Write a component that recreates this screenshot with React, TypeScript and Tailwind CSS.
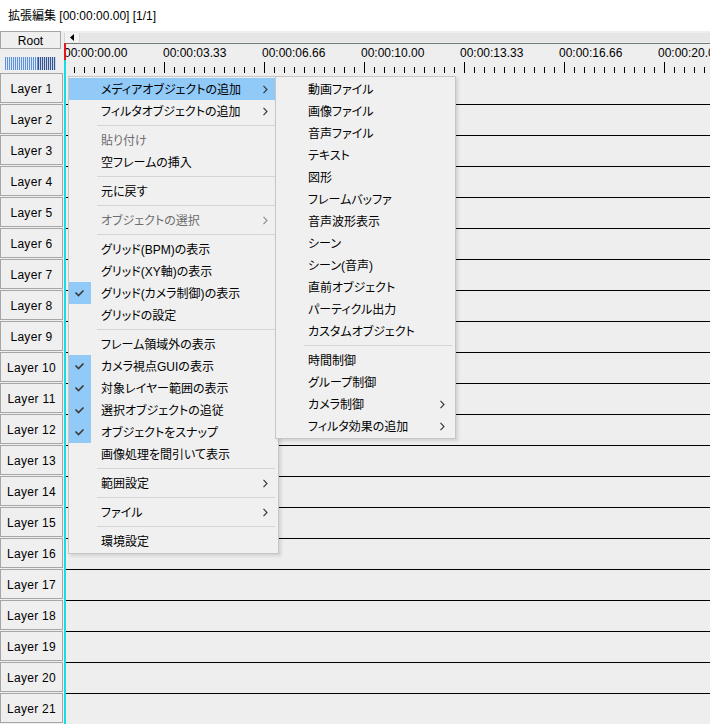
import React from 'react';

type Entry = {
  label?: string;
  sep?: boolean;
  checked?: boolean;
  disabled?: boolean;
  arrow?: boolean;
  active?: boolean;
};

const mainMenu: Entry[] = [
  { label: 'メディアオブジェクトの追加', arrow: true, active: true },
  { label: 'フィルタオブジェクトの追加', arrow: true },
  { sep: true },
  { label: '貼り付け', disabled: true },
  { label: '空フレームの挿入' },
  { sep: true },
  { label: '元に戻す' },
  { sep: true },
  { label: 'オブジェクトの選択', disabled: true, arrow: true },
  { sep: true },
  { label: 'グリッド(BPM)の表示' },
  { label: 'グリッド(XY軸)の表示' },
  { label: 'グリッド(カメラ制御)の表示', checked: true },
  { label: 'グリッドの設定' },
  { sep: true },
  { label: 'フレーム領域外の表示' },
  { label: 'カメラ視点GUIの表示', checked: true },
  { label: '対象レイヤー範囲の表示', checked: true },
  { label: '選択オブジェクトの追従', checked: true },
  { label: 'オブジェクトをスナップ', checked: true },
  { label: '画像処理を間引いて表示' },
  { sep: true },
  { label: '範囲設定', arrow: true },
  { sep: true },
  { label: 'ファイル', arrow: true },
  { sep: true },
  { label: '環境設定' },
];

const mediaMenu: Entry[] = [
  { label: '動画ファイル' },
  { label: '画像ファイル' },
  { label: '音声ファイル' },
  { label: 'テキスト' },
  { label: '図形' },
  { label: 'フレームバッファ' },
  { label: '音声波形表示' },
  { label: 'シーン' },
  { label: 'シーン(音声)' },
  { label: '直前オブジェクト' },
  { label: 'パーティクル出力' },
  { label: 'カスタムオブジェクト' },
  { sep: true },
  { label: '時間制御' },
  { label: 'グループ制御' },
  { label: 'カメラ制御', arrow: true },
  { label: 'フィルタ効果の追加', arrow: true },
];

const times = ['00:00:00.00', '00:00:03.33', '00:00:06.66', '00:00:10.00', '00:00:13.33', '00:00:16.66', '00:00:20.00'];
const layers = Array.from({ length: 21 }, (_, i) => i + 1);

function MenuItem({ e }: { e: Entry }) {
  if (e.sep) {
    return (
      <div className="h-[7px] flex items-center pl-[28px]">
        <div className="flex-1 h-px bg-[#d5d5d5]" />
      </div>
    );
  }
  return (
    <div className={`flex items-center h-[22px] ${e.active ? 'bg-[#91c9f7]' : ''}`}>
      <div className={`w-[22px] h-[22px] shrink-0 flex items-center justify-center ${e.checked ? 'bg-[#91c9f7]' : ''}`}>
        {e.checked && (
          <svg width="22" height="22" viewBox="0 0 22 22">
            <path d="M6.5 10.5 L9.5 13.5 L14.5 8.5" fill="none" stroke="#3a3a3a" strokeWidth="1.6" />
          </svg>
        )}
      </div>
      <span className={`ml-[10px] flex-1 whitespace-nowrap leading-[22px] pt-px ${e.disabled ? 'text-[#6d6d6d]' : 'text-black'}`}>
        {e.label}
      </span>
      {e.arrow && (
        <svg width="5" height="9" viewBox="0 0 5 9" className="mr-[7px] shrink-0">
          <path d="M0.5 0.8 L4 4.5 L0.5 8.2" fill="none" stroke={e.disabled ? '#8a8a8a' : '#333'} strokeWidth="1.1" />
        </svg>
      )}
    </div>
  );
}

function Menu({ items, className }: { items: Entry[]; className: string }) {
  return (
    <div className={`absolute top-[76px] bg-[#f0f0f0] border border-[#c6c6c6] py-[1px] pr-[3px] shadow-[2px_2px_3px_rgba(0,0,0,0.12)] ${className}`}>
      {items.map((e, i) => (
        <MenuItem key={i} e={e} />
      ))}
    </div>
  );
}

export default function App() {
  const ticks = Array.from({ length: 65 }, (_, i) => i * 10);
  return (
    <div className="relative w-[710px] h-[724px] overflow-hidden bg-[#eeeeee] text-[12px] text-black font-['Liberation_Sans','Noto_Sans_CJK_JP',sans-serif] [font-feature-settings:'palt']">
      {/* title */}
      <div className="h-[31px] bg-white flex items-center pl-[8px] pt-px whitespace-nowrap">拡張編集 [00:00:00.00] [1/1]</div>

      <div className="flex">
        {/* left column */}
        <div className="w-[64px] shrink-0 flex flex-col">
          <div className="w-[61px] h-[18px] border border-[#a6a6a6] bg-[#efefef] flex items-center justify-center leading-none pt-px">
            Root
          </div>
          <div className="mt-[8px] mb-[3px] ml-[5px] w-[51px] h-[13px] flex">
            <div className="w-[33px] bg-[repeating-linear-gradient(90deg,#5d92d8_0px,#5d92d8_1px,#dde7f5_1px,#dde7f5_2px)]" />
            <div className="flex-1 bg-[repeating-linear-gradient(90deg,#34548f_0px,#34548f_1px,#cdd6e6_1px,#cdd6e6_2px)]" />
          </div>
          {layers.map((n) => (
            <div key={n} className="h-[31px]">
              <div className="w-[63px] h-[30px] border border-[#a6a6a6] bg-[#efefef] flex items-center justify-center pt-[2px] whitespace-nowrap tracking-[0.3px]">
                Layer {n}
              </div>
            </div>
          ))}
        </div>

        {/* timeline */}
        <div className="flex-1 flex flex-col overflow-hidden">
          <div className="h-[12px] flex pt-[2px] pb-[1px]">
            <div className="w-[16px] bg-[#f3f3f3] border-l border-r border-[#d6d6d6] flex items-center pl-[5px]">
              <svg width="4" height="7" viewBox="0 0 4 7">
                <path d="M4 0 L0 3.5 L4 7 Z" fill="#000" />
              </svg>
            </div>
            <div className="flex-1 bg-[#e6e6e6]" />
          </div>
          <div className="h-[30px] border-t border-[#6f7a72] flex flex-col">
            <div className="h-[18px] flex items-center whitespace-nowrap font-['Liberation_Sans_Narrow','Liberation_Sans',sans-serif] text-[12px]">
              {times.map((t) => (
                <div key={t} className="w-[100px] shrink-0 -ml-px first:ml-0">
                  {t}
                </div>
              ))}
            </div>
            <svg width="646" height="11" className="block">
              {ticks.map((x) => (
                <line
                  key={x}
                  x1={x + 0.5}
                  x2={x + 0.5}
                  y1={x % 100 === 0 ? 0 : 5}
                  y2={11}
                  stroke="#000"
                  strokeWidth="1"
                />
              ))}
            </svg>
          </div>
          {layers.map((n) => (
            <div key={n} className={`h-[31px] ${n > 1 ? 'border-t border-black' : ''}`} />
          ))}
        </div>
      </div>

      {/* current-frame cursor */}
      <div className="absolute left-[64px] top-[43px] w-[2px] h-[17px] bg-[#e8141c]" />
      <div className="absolute left-[64px] top-[60px] bottom-0 w-[2px] bg-[#16dde3]" />

      <Menu items={mainMenu} className="left-[68px] w-[211px]" />
      <Menu items={mediaMenu} className="left-[275px] w-[181px]" />
    </div>
  );
}
